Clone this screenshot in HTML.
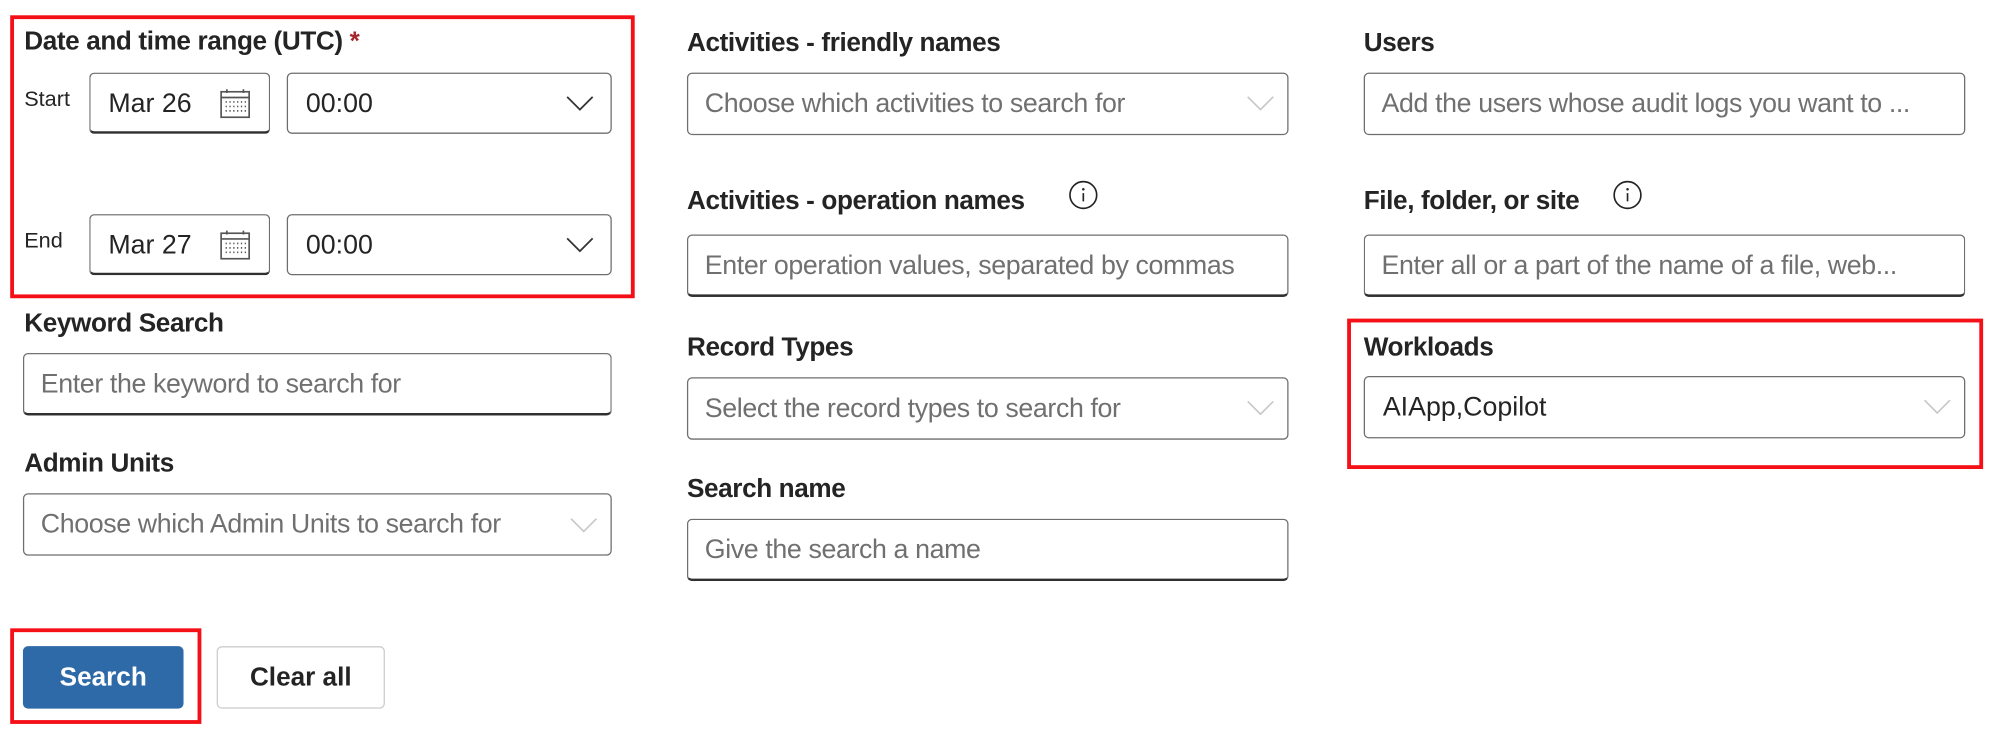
<!DOCTYPE html>
<html><head><meta charset="utf-8"><style>
html,body{margin:0;padding:0;background:#fff;overflow:hidden}
body{width:1998px;height:732px}
#w{position:absolute;left:0;top:0;width:1568px;height:575px;transform:scale(1.2745);transform-origin:0 0;font-family:"Liberation Sans",sans-serif;color:#242424}
.a{position:absolute}
.lbl{position:absolute;font-size:20.5px;font-weight:bold;color:#242424;white-space:nowrap;letter-spacing:-0.3px}
.box{position:absolute;box-sizing:border-box;border:1px solid #6e6e6e;border-radius:4px;height:49px;background:#fff}
.tx{border-bottom:2px solid #303030}
.ph{position:absolute;left:13px;top:12px;font-size:21px;color:#707070;white-space:nowrap;letter-spacing:-0.3px}
.val{position:absolute;left:14px;top:12px;font-size:21px;color:#242424;white-space:nowrap}
.red{position:absolute;box-sizing:border-box;border:3px solid #f50f16}
svg{position:absolute}
</style></head><body><div id="w">

<div class="red" style="left:8px;top:12px;width:490px;height:222px"></div>
<div class="lbl" style="left:19px;top:21px">Date and time range (UTC) <span style="color:#a4262c">*</span></div>
<div class="a" style="left:19px;top:68px;font-size:17px">Start</div>
<div class="a" style="left:19px;top:179px;font-size:17px">End</div>

<div class="box tx" style="left:70px;top:57px;width:142px;height:48px"><div class="val">Mar 26</div>
<svg style="left:101px;top:11px" width="25" height="25" viewBox="0 0 25 25" fill="none" stroke="#555" stroke-width="1.3"><rect x="1.5" y="3" width="22" height="20"/><line x1="1.5" y1="7.5" x2="23.5" y2="7.5"/><line x1="6" y1="1" x2="6" y2="4"/><line x1="19" y1="1" x2="19" y2="4"/><g stroke-dasharray="1 2"><line x1="5" y1="11" x2="21" y2="11"/><line x1="5" y1="14.5" x2="21" y2="14.5"/><line x1="5" y1="18" x2="21" y2="18"/></g></svg></div>
<div class="box" style="left:225px;top:57px;width:255px;height:48px"><div class="val">00:00</div>
<svg style="left:218px;top:16px" width="22" height="14" viewBox="0 0 22 14"><path d="M1 2 L11 12 L21 2" fill="none" stroke="#333" stroke-width="1.4"/></svg></div>

<div class="box tx" style="left:70px;top:168px;width:142px;height:48px"><div class="val">Mar 27</div>
<svg style="left:101px;top:11px" width="25" height="25" viewBox="0 0 25 25" fill="none" stroke="#555" stroke-width="1.3"><rect x="1.5" y="3" width="22" height="20"/><line x1="1.5" y1="7.5" x2="23.5" y2="7.5"/><line x1="6" y1="1" x2="6" y2="4"/><line x1="19" y1="1" x2="19" y2="4"/><g stroke-dasharray="1 2"><line x1="5" y1="11" x2="21" y2="11"/><line x1="5" y1="14.5" x2="21" y2="14.5"/><line x1="5" y1="18" x2="21" y2="18"/></g></svg></div>
<div class="box" style="left:225px;top:168px;width:255px;height:48px"><div class="val">00:00</div>
<svg style="left:218px;top:16px" width="22" height="14" viewBox="0 0 22 14"><path d="M1 2 L11 12 L21 2" fill="none" stroke="#333" stroke-width="1.4"/></svg></div>

<div class="lbl" style="left:19px;top:242px">Keyword Search</div>
<div class="box tx" style="left:18px;top:277px;width:462px"><div class="ph">Enter the keyword to search for</div></div>
<div class="lbl" style="left:19px;top:352px">Admin Units</div>
<div class="box" style="left:18px;top:387px;width:462px"><div class="ph">Choose which Admin Units to search for</div>
<svg style="left:428px;top:17px" width="22" height="14" viewBox="0 0 22 14"><path d="M1 2 L11 12 L21 2" fill="none" stroke="#c8c8c8" stroke-width="1.3"/></svg></div>

<div class="red" style="left:8px;top:493px;width:150px;height:75px"></div>
<div class="a" style="left:18px;top:507px;width:126px;height:49px;background:#2f6aa8;border-radius:4px;color:#fff;font-size:20.5px;font-weight:bold;text-align:center;line-height:49px">Search</div>
<div class="a" style="left:170px;top:507px;width:132px;height:49px;box-sizing:border-box;border:1px solid #ccc;border-radius:4px;color:#242424;font-size:20.5px;font-weight:bold;text-align:center;line-height:47px">Clear all</div>

<div class="lbl" style="left:539px;top:22px">Activities - friendly names</div>
<div class="box" style="left:539px;top:57px;width:472px"><div class="ph">Choose which activities to search for</div>
<svg style="left:438px;top:16px" width="22" height="14" viewBox="0 0 22 14"><path d="M1 2 L11 12 L21 2" fill="none" stroke="#c8c8c8" stroke-width="1.3"/></svg></div>
<div class="lbl" style="left:539px;top:146px">Activities - operation names</div>
<svg style="left:838px;top:141px" width="24" height="24" viewBox="0 0 24 24"><circle cx="12" cy="12" r="10.5" fill="none" stroke="#242424" stroke-width="1.3"/><circle cx="12" cy="7.5" r="1" fill="#242424"/><line x1="12" y1="10.5" x2="12" y2="17" stroke="#242424" stroke-width="1.3"/></svg>
<div class="box tx" style="left:539px;top:184px;width:472px"><div class="ph">Enter operation values, separated by commas</div></div>
<div class="lbl" style="left:539px;top:261px">Record Types</div>
<div class="box" style="left:539px;top:296px;width:472px"><div class="ph">Select the record types to search for</div>
<svg style="left:438px;top:16px" width="22" height="14" viewBox="0 0 22 14"><path d="M1 2 L11 12 L21 2" fill="none" stroke="#c8c8c8" stroke-width="1.3"/></svg></div>
<div class="lbl" style="left:539px;top:372px">Search name</div>
<div class="box tx" style="left:539px;top:407px;width:472px"><div class="ph">Give the search a name</div></div>

<div class="lbl" style="left:1070px;top:22px">Users</div>
<div class="box" style="left:1070px;top:57px;width:472px"><div class="ph">Add the users whose audit logs you want to ...</div></div>
<div class="lbl" style="left:1070px;top:146px">File, folder, or site</div>
<svg style="left:1265px;top:141px" width="24" height="24" viewBox="0 0 24 24"><circle cx="12" cy="12" r="10.5" fill="none" stroke="#242424" stroke-width="1.3"/><circle cx="12" cy="7.5" r="1" fill="#242424"/><line x1="12" y1="10.5" x2="12" y2="17" stroke="#242424" stroke-width="1.3"/></svg>
<div class="box tx" style="left:1070px;top:184px;width:472px"><div class="ph">Enter all or a part of the name of a file, web...</div></div>

<div class="red" style="left:1057px;top:250px;width:499px;height:118px"></div>
<div class="lbl" style="left:1070px;top:261px">Workloads</div>
<div class="box" style="left:1070px;top:295px;width:472px"><div class="val">AIApp,Copilot</div>
<svg style="left:438px;top:16px" width="22" height="14" viewBox="0 0 22 14"><path d="M1 2 L11 12 L21 2" fill="none" stroke="#c8c8c8" stroke-width="1.3"/></svg></div>

</div></body></html>
